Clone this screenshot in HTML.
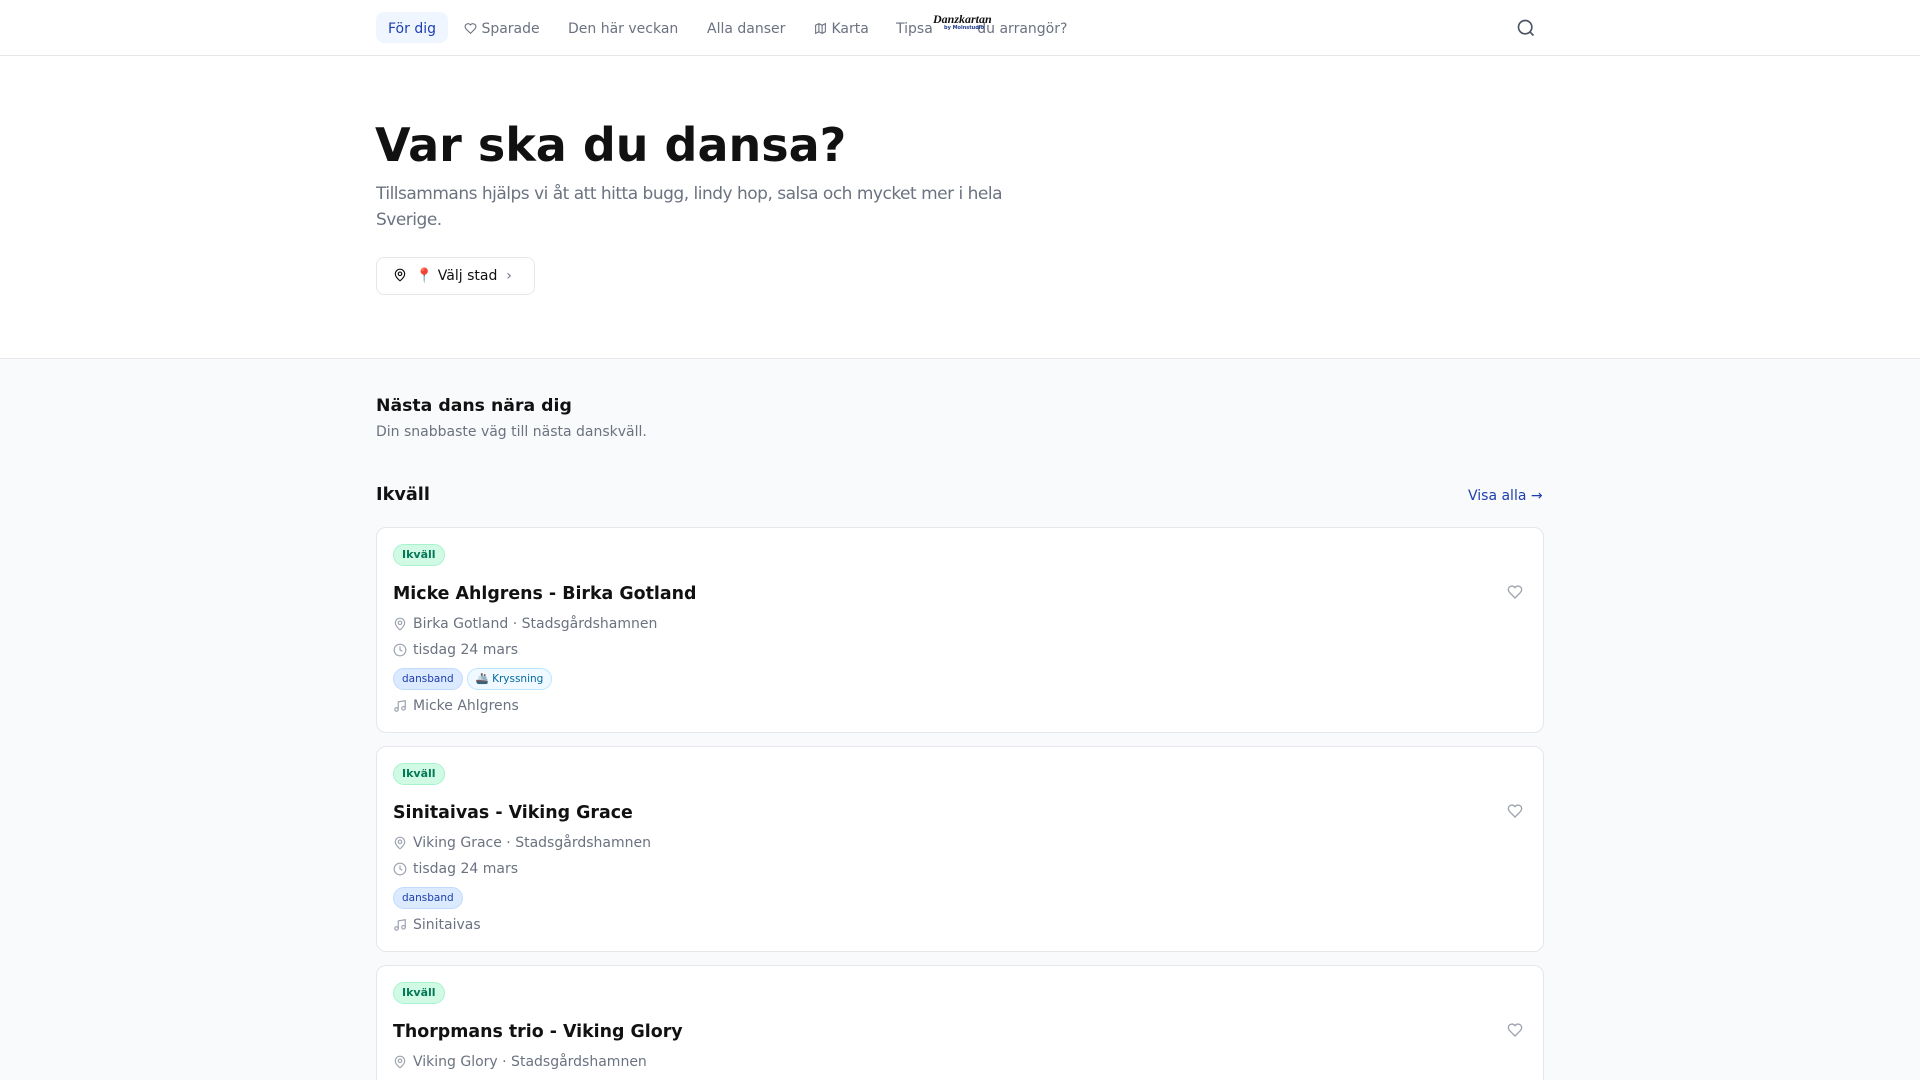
<!DOCTYPE html>
<html><head><meta charset="utf-8"><style>
*{box-sizing:border-box;margin:0;padding:0}
html{width:1920px;height:1080px;overflow:hidden}
body{width:1920px;height:1080px;overflow:hidden;background:#f9fafb;font-family:"DejaVu Sans","Liberation Sans",sans-serif;color:#111827;position:relative}
.a{position:absolute;white-space:nowrap}
nav{position:absolute;left:0;top:0;width:1920px;height:56px;background:#fff;border-bottom:1px solid #e5e7eb}
.ni{position:absolute;top:12px;height:31px;line-height:31px;font-size:14px;color:#6b7280;padding:0 12px;padding-top:2px}
.hero{position:absolute;left:0;top:56px;width:1920px;height:303px;background:#fff;border-bottom:1px solid #e5e7eb}
.card{position:absolute;left:376px;width:1168px;height:206px;background:#fff;border:1px solid #e5e7eb;border-radius:10px;overflow:hidden}
.badge{position:absolute;left:16px;top:16px;height:22px;line-height:20px;padding:0 8px;font-size:11px;font-weight:bold;color:#047857;background:#d1fae5;border:1px solid #a7f3d0;border-radius:11px}
.ct{position:absolute;left:16px;top:56px;font-size:17.4px;font-weight:bold;color:#111}
.row{position:absolute;left:16px;font-size:14px;color:#6b7280;display:flex;align-items:center;gap:6px}
.tag{display:inline-block;height:22px;line-height:20px;padding:0 8px;font-size:10.5px;border-radius:11px;margin-right:-2px}
.t1{background:#dbeafe;color:#1e40af;border:1px solid #bfdbfe}
.t2{background:#f0f9ff;color:#0369a1;border:1px solid #bae6fd}
.heart{position:absolute;right:20px;top:56px}
</style></head><body>
<nav>
<div class="ni" style="left:376px;background:#eff6ff;color:#1e40af;border-radius:8px">För dig</div>
<div class="ni" style="left:452px"><svg width="13" height="13" viewBox="0 0 24 24" fill="none" stroke="#6b7280" stroke-width="2" style="vertical-align:-2px"><path d="M19 14c1.5-1.5 3-3.2 3-5.5A5.5 5.5 0 0 0 12 5.5 5.5 5.5 0 0 0 2 8.5c0 2.3 1.5 4 3 5.5l7 7z"/></svg> Sparade</div>
<div class="ni" style="left:556px">Den här veckan</div>
<div class="ni" style="left:695px">Alla danser</div>
<div class="ni" style="left:802px"><svg width="13" height="13" viewBox="0 0 24 24" fill="none" stroke="#6b7280" stroke-width="2" style="vertical-align:-2px"><path d="M3 6l6-3 6 3 6-3v15l-6 3-6-3-6 3z M9 3v15 M15 6v15"/></svg> Karta</div>
<div class="ni" style="left:884px">Tipsa &nbsp;&nbsp;&nbsp;&nbsp;&nbsp;&nbsp;&nbsp;&nbsp; du arrangör?</div>
<div class="a" style="left:933px;top:12px;font-family:'Liberation Serif',serif;font-style:italic;font-weight:bold;font-size:12px;color:#111">Danzkartan</div>
<div class="a" style="left:944px;top:25px;font-size:5px;color:#1e3a8a;font-weight:bold">by Molnstudio</div>
<svg class="a" style="left:1516px;top:18px" width="20" height="20" viewBox="0 0 24 24" fill="none" stroke="#4b5563" stroke-width="2"><circle cx="11" cy="11" r="8"/><path d="M21 21l-4.3-4.3"/></svg>
</nav>
<div class="hero">
<div class="a" style="left:375px;top:62px;font-size:46px;font-weight:bold;color:#111">Var ska du dansa?</div>
<div class="a" style="left:376px;top:125px;font-size:17px;letter-spacing:-0.5px;line-height:26px;color:#6b7280;white-space:normal;width:680px">Tillsammans hjälps vi åt att hitta bugg, lindy hop, salsa och mycket mer i hela Sverige.</div>
<div class="a" style="left:376px;top:201px;width:159px;height:38px;border:1px solid #e5e7eb;border-radius:8px;font-size:14px;line-height:36px;padding-left:16px;color:#111">
<svg width="14" height="14" viewBox="0 0 24 24" fill="none" stroke="#111" stroke-width="2" style="vertical-align:-2px"><path d="M20 10c0 6-8 12-8 12s-8-6-8-12a8 8 0 0 1 16 0z"/><circle cx="12" cy="10" r="3"/></svg>&nbsp; <span style="color:#e11d48">📍</span> Välj stad &nbsp;<span style="color:#6b7280">›</span></div>
</div>
<div class="a" style="left:376px;top:396px;font-size:17.3px;font-weight:bold;color:#111">Nästa dans nära dig</div>
<div class="a" style="left:376px;top:424px;font-size:14px;color:#6b7280">Din snabbaste väg till nästa danskväll.</div>
<div class="a" style="left:376px;top:485px;font-size:17.7px;font-weight:bold;color:#111">Ikväll</div>
<div class="a" style="left:1468px;top:488px;font-size:14px;color:#1e40af">Visa alla →</div>

<div class="card" style="top:527px">
<div class="badge">Ikväll</div>
<div class="ct">Micke Ahlgrens - Birka Gotland</div>
<div class="row" style="top:88px"><svg width="14" height="14" viewBox="0 0 24 24" fill="none" stroke="#9ca3af" stroke-width="2"><path d="M20 10c0 6-8 12-8 12s-8-6-8-12a8 8 0 0 1 16 0z"/><circle cx="12" cy="10" r="3"/></svg>Birka Gotland · Stadsgårdshamnen</div>
<div class="row" style="top:114px"><svg width="14" height="14" viewBox="0 0 24 24" fill="none" stroke="#9ca3af" stroke-width="2"><circle cx="12" cy="12" r="10"/><path d="M12 6v6l4 2"/></svg>tisdag 24 mars</div>
<div class="row" style="top:140px"><span class="tag t1">dansband</span><span class="tag t2">🚢 Kryssning</span></div>
<div class="row" style="top:170px"><svg width="14" height="14" viewBox="0 0 24 24" fill="none" stroke="#9ca3af" stroke-width="2"><path d="M9 18V5l12-2v13"/><circle cx="6" cy="18" r="3"/><circle cx="18" cy="16" r="3"/></svg>Micke Ahlgrens</div>
<svg class="heart" width="16" height="16" viewBox="0 0 24 24" fill="none" stroke="#9ca3af" stroke-width="2"><path d="M19 14c1.5-1.5 3-3.2 3-5.5A5.5 5.5 0 0 0 12 5.5 5.5 5.5 0 0 0 2 8.5c0 2.3 1.5 4 3 5.5l7 7z"/></svg>
</div>

<div class="card" style="top:746px">
<div class="badge">Ikväll</div>
<div class="ct">Sinitaivas - Viking Grace</div>
<div class="row" style="top:88px"><svg width="14" height="14" viewBox="0 0 24 24" fill="none" stroke="#9ca3af" stroke-width="2"><path d="M20 10c0 6-8 12-8 12s-8-6-8-12a8 8 0 0 1 16 0z"/><circle cx="12" cy="10" r="3"/></svg>Viking Grace · Stadsgårdshamnen</div>
<div class="row" style="top:114px"><svg width="14" height="14" viewBox="0 0 24 24" fill="none" stroke="#9ca3af" stroke-width="2"><circle cx="12" cy="12" r="10"/><path d="M12 6v6l4 2"/></svg>tisdag 24 mars</div>
<div class="row" style="top:140px"><span class="tag t1">dansband</span></div>
<div class="row" style="top:170px"><svg width="14" height="14" viewBox="0 0 24 24" fill="none" stroke="#9ca3af" stroke-width="2"><path d="M9 18V5l12-2v13"/><circle cx="6" cy="18" r="3"/><circle cx="18" cy="16" r="3"/></svg>Sinitaivas</div>
<svg class="heart" width="16" height="16" viewBox="0 0 24 24" fill="none" stroke="#9ca3af" stroke-width="2"><path d="M19 14c1.5-1.5 3-3.2 3-5.5A5.5 5.5 0 0 0 12 5.5 5.5 5.5 0 0 0 2 8.5c0 2.3 1.5 4 3 5.5l7 7z"/></svg>
</div>

<div class="card" style="top:965px;height:140px">
<div class="badge">Ikväll</div>
<div class="ct">Thorpmans trio - Viking Glory</div>
<div class="row" style="top:88px"><svg width="14" height="14" viewBox="0 0 24 24" fill="none" stroke="#9ca3af" stroke-width="2"><path d="M20 10c0 6-8 12-8 12s-8-6-8-12a8 8 0 0 1 16 0z"/><circle cx="12" cy="10" r="3"/></svg>Viking Glory · Stadsgårdshamnen</div>
<svg class="heart" width="16" height="16" viewBox="0 0 24 24" fill="none" stroke="#9ca3af" stroke-width="2"><path d="M19 14c1.5-1.5 3-3.2 3-5.5A5.5 5.5 0 0 0 12 5.5 5.5 5.5 0 0 0 2 8.5c0 2.3 1.5 4 3 5.5l7 7z"/></svg>
</div>
</body></html>
